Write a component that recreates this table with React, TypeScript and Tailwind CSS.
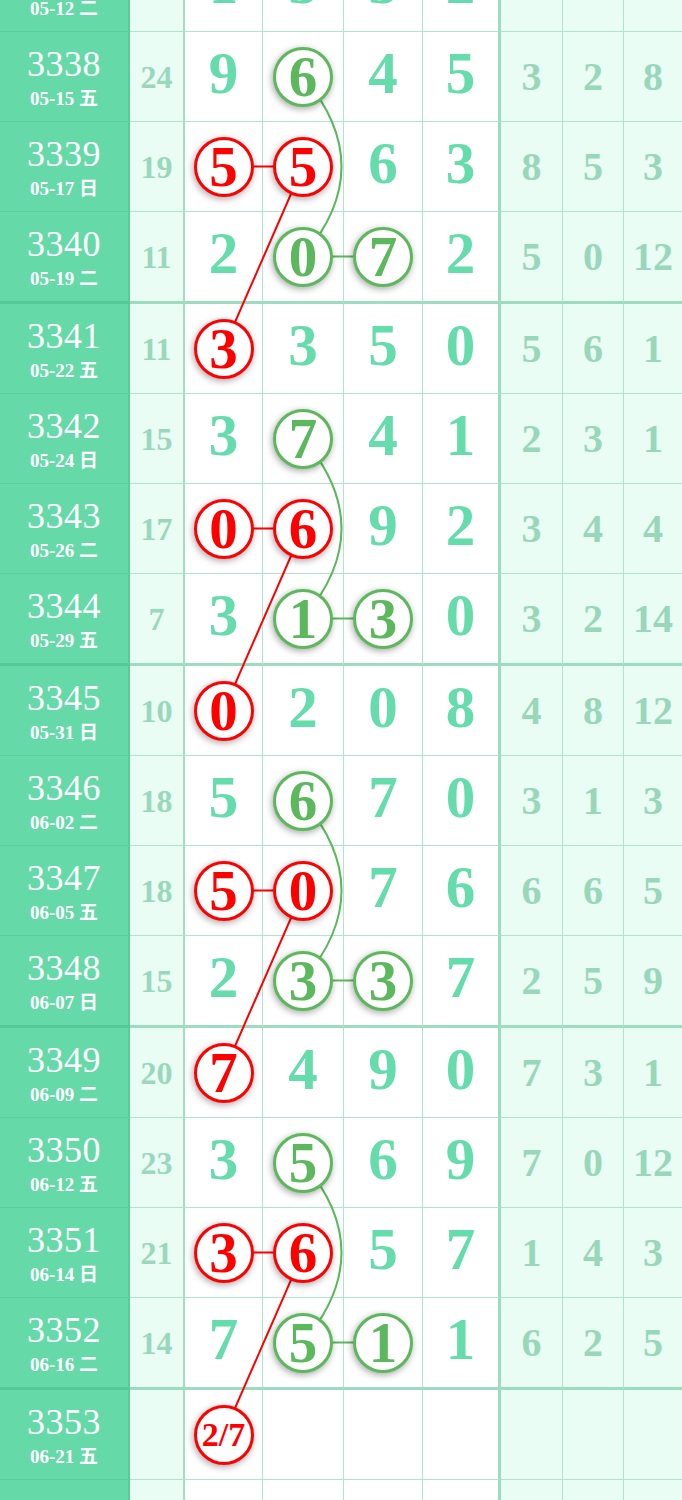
import React from 'react';

interface Row {
  no: string;
  date: string;
  sum: string;
  d: string[];
  m: string; // r = red ball, g = green ball, . = plain
  r: string[];
}

const rows: Row[] = [
  { no: '3337', date: '05-12 二', sum: '', d: ['1', '3', '3', '2'], m: '....', r: ['1', '3', '7'] },
  { no: '3338', date: '05-15 五', sum: '24', d: ['9', '6', '4', '5'], m: '.g..', r: ['3', '2', '8'] },
  { no: '3339', date: '05-17 日', sum: '19', d: ['5', '5', '6', '3'], m: 'rr..', r: ['8', '5', '3'] },
  { no: '3340', date: '05-19 二', sum: '11', d: ['2', '0', '7', '2'], m: '.gg.', r: ['5', '0', '12'] },
  { no: '3341', date: '05-22 五', sum: '11', d: ['3', '3', '5', '0'], m: 'r...', r: ['5', '6', '1'] },
  { no: '3342', date: '05-24 日', sum: '15', d: ['3', '7', '4', '1'], m: '.g..', r: ['2', '3', '1'] },
  { no: '3343', date: '05-26 二', sum: '17', d: ['0', '6', '9', '2'], m: 'rr..', r: ['3', '4', '4'] },
  { no: '3344', date: '05-29 五', sum: '7', d: ['3', '1', '3', '0'], m: '.gg.', r: ['3', '2', '14'] },
  { no: '3345', date: '05-31 日', sum: '10', d: ['0', '2', '0', '8'], m: 'r...', r: ['4', '8', '12'] },
  { no: '3346', date: '06-02 二', sum: '18', d: ['5', '6', '7', '0'], m: '.g..', r: ['3', '1', '3'] },
  { no: '3347', date: '06-05 五', sum: '18', d: ['5', '0', '7', '6'], m: 'rr..', r: ['6', '6', '5'] },
  { no: '3348', date: '06-07 日', sum: '15', d: ['2', '3', '3', '7'], m: '.gg.', r: ['2', '5', '9'] },
  { no: '3349', date: '06-09 二', sum: '20', d: ['7', '4', '9', '0'], m: 'r...', r: ['7', '3', '1'] },
  { no: '3350', date: '06-12 五', sum: '23', d: ['3', '5', '6', '9'], m: '.g..', r: ['7', '0', '12'] },
  { no: '3351', date: '06-14 日', sum: '21', d: ['3', '6', '5', '7'], m: 'rr..', r: ['1', '4', '3'] },
  { no: '3352', date: '06-16 二', sum: '14', d: ['7', '5', '1', '1'], m: '.gg.', r: ['6', '2', '5'] },
  { no: '3353', date: '06-21 五', sum: '', d: ['2/7', '', '', ''], m: 'r...', r: ['', '', ''] },
  { no: '3354', date: '06-23 日', sum: '', d: ['', '', '', ''], m: '....', r: ['', '', ''] },
];

// every 4th row (3340, 3344 ...) closes a group with a thick line
const isEnd = (i: number) => i % 4 === 3;

const rowTop = (i: number) => i * 90 + 2 * Math.floor(i / 4);
const cy = (i: number) => rowTop(i) + 44.5;
const cx = [223.5, 303, 383, 461.5];

function Ball({ v, red }: { v: string; red: boolean }) {
  return (
    <div
      className={`relative z-10 flex h-[60px] w-[60px] items-center justify-center rounded-full border-[3px] bg-white shadow-[-1px_2px_7px_rgba(0,0,0,0.35)] ${
        red ? 'border-[#ff0000] text-[#ff0000]' : 'border-[#5cb85c] text-[#5cb85c]'
      }`}
    >
      <span className={v.length > 1 ? 'text-[34px] font-bold leading-none' : 'text-[57px] font-bold leading-none'}>
        {v}
      </span>
    </div>
  );
}

function TableRow({ row, end }: { row: Row; end: boolean }) {
  const line = end ? 'border-b-[3px] border-b-[#9cdcc0]' : 'border-b border-b-[#ace6cd]';
  return (
    <div
      className={`grid grid-cols-[130px_55px_78px_81px_79px_78px_62px_61px_58px] ${end ? 'h-[92px]' : 'h-[90px]'}`}
    >
      <div
        className={`flex flex-col items-center justify-center bg-[#66d9a9] border-r-2 border-r-[#5acb9b] text-white ${
          end ? 'border-b-[3px] border-b-[#56c797]' : 'border-b border-b-[#5ccd9d]'
        }`}
      >
        <span className="text-[36px] leading-none tracking-[0.5px]">{row.no}</span>
        <span className="mt-[7px] text-[19px] font-bold leading-none">{row.date}</span>
      </div>
      <div className={`flex items-center justify-center bg-[#e9fdf4] border-r-2 border-r-[#a2dec4] ${line}`}>
        <span className="text-[32px] font-bold leading-none text-[#9ad8bb]">{row.sum}</span>
      </div>
      {row.d.map((v, j) => (
        <div
          key={j}
          className={`flex items-center justify-center bg-white ${
            j === 3 ? 'border-r-[3px] border-r-[#9cdcc0]' : 'border-r border-r-[#ace6cd]'
          } ${line}`}
        >
          {row.m[j] === '.' ? (
            <span className="pb-[6px] text-[59px] font-bold leading-none text-[#64dcab]">{v}</span>
          ) : (
            <Ball v={v} red={row.m[j] === 'r'} />
          )}
        </div>
      ))}
      {row.r.map((v, j) => (
        <div
          key={j}
          className={`flex items-center justify-center bg-[#e9fdf4] ${j < 2 ? 'border-r border-r-[#ace6cd]' : ''} ${line}`}
        >
          <span className="text-[40px] font-bold leading-none text-[#98d7b9]">{v}</span>
        </div>
      ))}
    </div>
  );
}

function Links() {
  const groups = [1, 5, 9, 13];
  return (
    <svg className="pointer-events-none absolute left-0 top-0" width={682} height={1700}>
      {groups.map((g) => (
        <g key={g} fill="none" strokeWidth={2}>
          <path
            d={`M ${cx[1]} ${cy(g)} Q 380 ${cy(g + 1)} ${cx[1]} ${cy(g + 2)}`}
            stroke="#5cb85c"
          />
          <line x1={cx[1]} y1={cy(g + 2)} x2={cx[2]} y2={cy(g + 2)} stroke="#5cb85c" />
          <line x1={cx[0]} y1={cy(g + 1)} x2={cx[1]} y2={cy(g + 1)} stroke="#ff0000" />
          <line x1={cx[1]} y1={cy(g + 1)} x2={cx[0]} y2={cy(g + 3)} stroke="#ff0000" />
        </g>
      ))}
    </svg>
  );
}

export default function App() {
  return (
    <div className="h-[1500px] w-[682px] overflow-hidden bg-white font-['Liberation_Serif','Noto_Sans_CJK_SC',serif]">
      <div className="relative -mt-[58px]">
        {rows.map((row, i) => (
          <TableRow key={row.no} row={row} end={isEnd(i)} />
        ))}
        <Links />
      </div>
    </div>
  );
}
